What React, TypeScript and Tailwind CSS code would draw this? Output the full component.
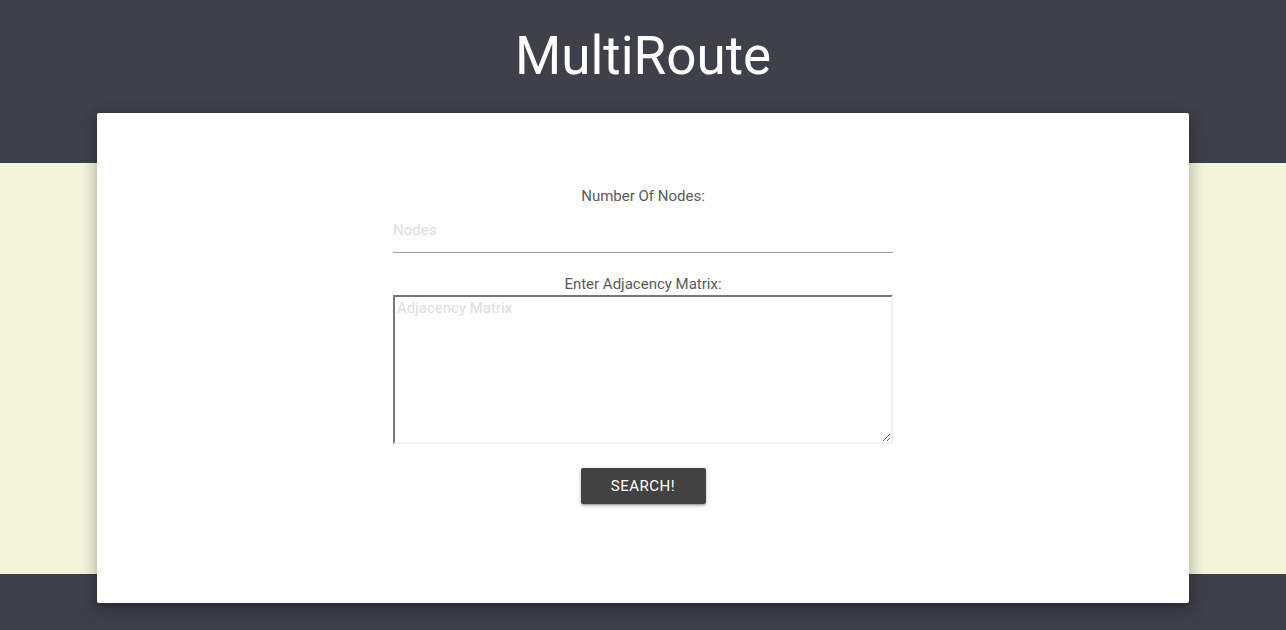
import React from "react";

const font = { fontFamily: "Roboto, 'Liberation Sans', sans-serif" };

export default function App() {
  return (
    <div
      style={font}
      className="min-h-[630px] bg-[linear-gradient(to_bottom,#3e414a_0,#3e414a_163px,#f4f4da_163px,#f4f4da_574px,#3e414a_574px)] pb-[27px]"
    >
      <header className="flex h-[113px] items-center justify-center">
        <h1 className="text-[53px] font-normal leading-none text-white">MultiRoute</h1>
      </header>

      <main className="mx-[97px] flex h-[490px] flex-col items-center rounded-[2px] bg-white pt-[74px] shadow-[0_8px_17px_2px_rgba(0,0,0,0.14),0_3px_14px_2px_rgba(0,0,0,0.12),0_5px_5px_-3px_rgba(0,0,0,0.2)]">
        <form className="flex w-[500px] flex-col items-center">
          <label className="text-[15px] leading-[18px] text-[#5a5a5a]">Number Of Nodes:</label>
          <input
            type="text"
            placeholder="Nodes"
            className="mt-[2px] h-[46px] w-full border-b border-[#9e9e9e] bg-transparent text-[15px] text-[#333] outline-none placeholder:text-[#dcdcdc]"
          />
          <label className="mt-[22px] text-[15px] leading-[18px] text-[#5a5a5a]">Enter Adjacency Matrix:</label>
          <textarea
            placeholder="Adjacency Matrix"
            className="mt-[2px] h-[149px] w-full resize border-2 border-[#767676_#f0f0f0_#f0f0f0_#767676] p-[2px] text-[15px] leading-[18px] text-[#333] outline-none placeholder:text-[#dcdcdc]"
          />
          <button
            type="button"
            className="mt-[24px] h-[36px] w-[125px] rounded-[2px] bg-[#424242] text-[15px] uppercase tracking-[0.5px] text-white shadow-[0_2px_2px_0_rgba(0,0,0,0.14),0_3px_1px_-2px_rgba(0,0,0,0.12),0_1px_5px_0_rgba(0,0,0,0.2)]"
          >
            Search!
          </button>
        </form>
      </main>
    </div>
  );
}
